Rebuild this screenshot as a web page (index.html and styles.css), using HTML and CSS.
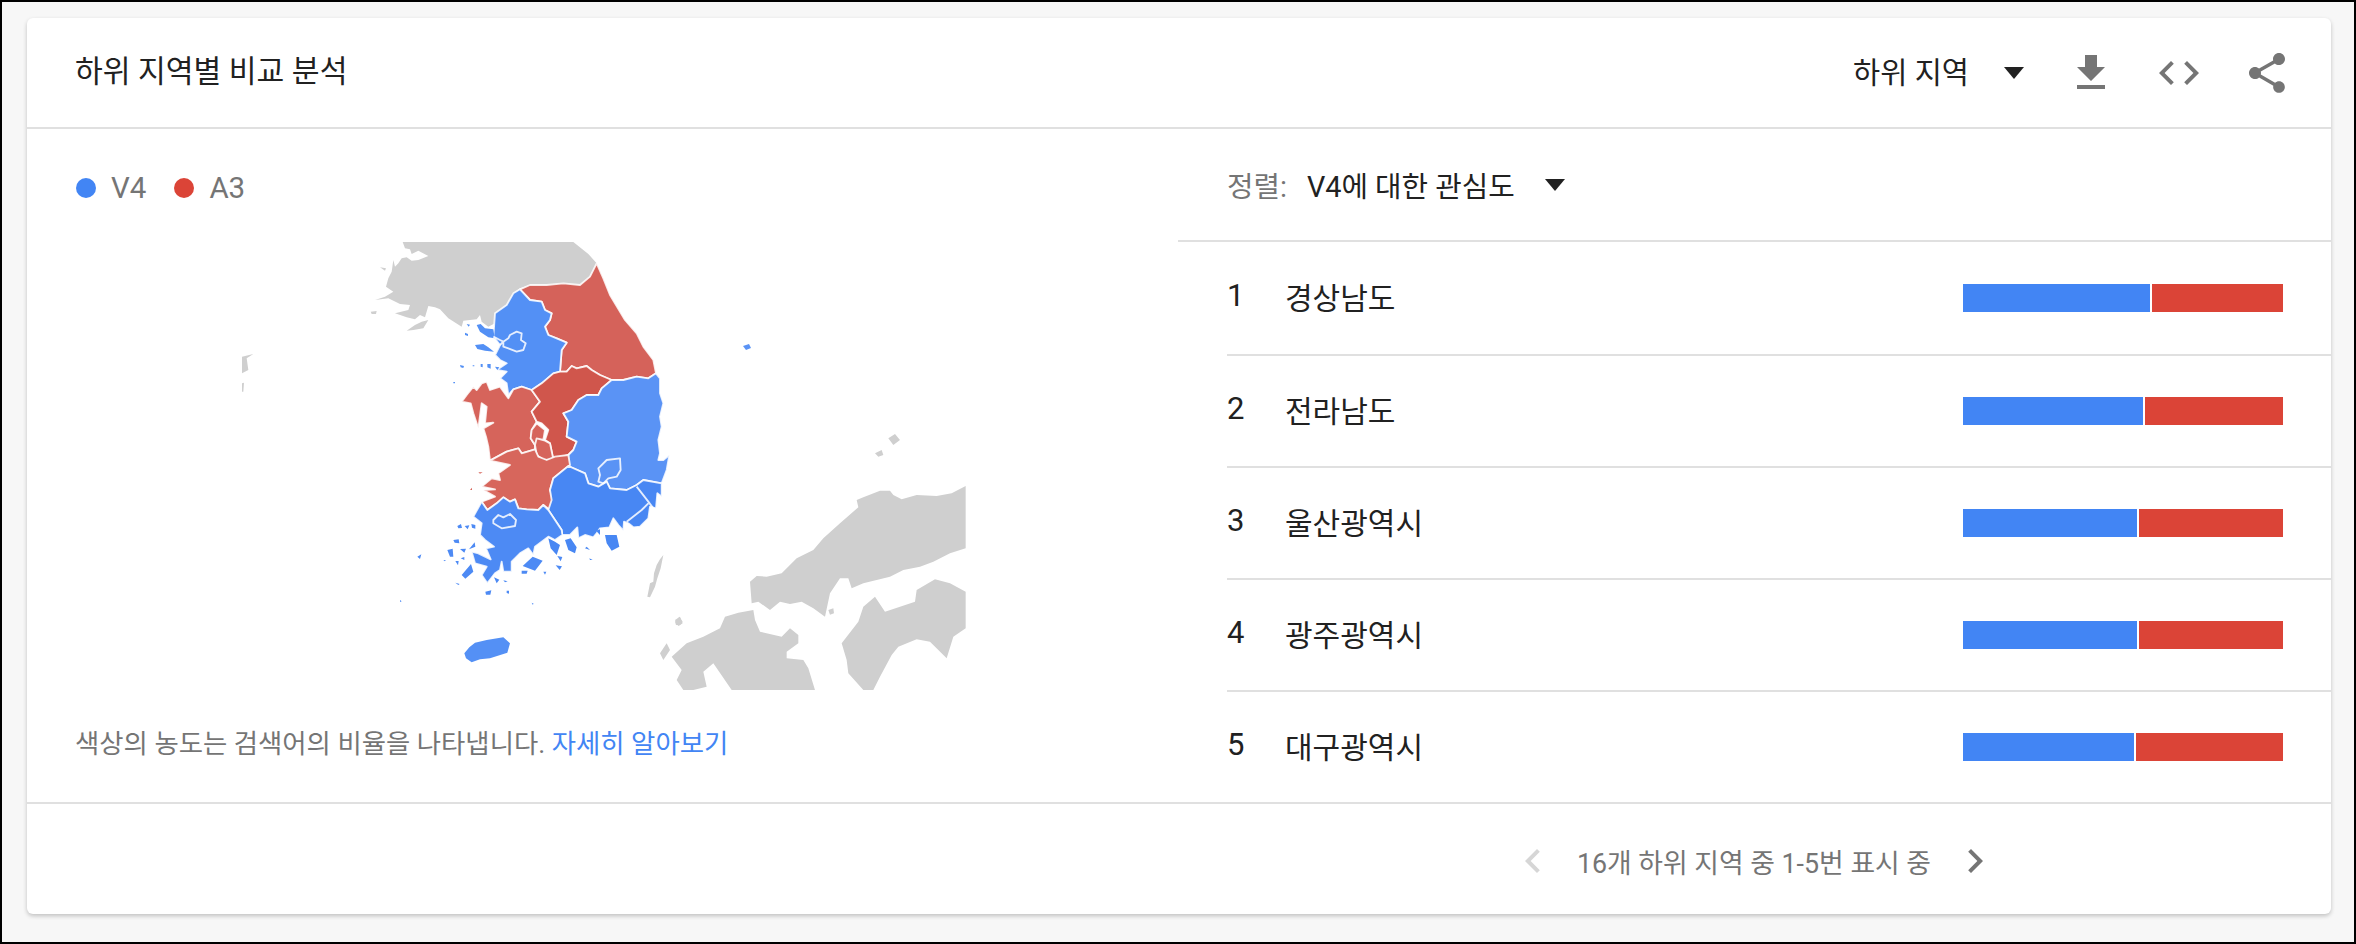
FILE: index.html
```html
<!DOCTYPE html>
<html lang="ko">
<head>
<meta charset="utf-8">
<title>하위 지역별 비교 분석</title>
<link rel="stylesheet" href="styles.css">
</head>
<body>
<main class="page">
  <section class="card">
    <header class="card-head">
      <h2 class="title">하위 지역별 비교 분석</h2>
      <div class="tools">
        <span class="picker">하위 지역</span>
        <span class="caret caret-head"></span>
        <div class="icons">
          <svg class="icon" viewBox="0 0 24 24"><path d="M19 9h-4V3H9v6H5l7 7 7-7zM5 18v2h14v-2H5z"/></svg>
          <svg class="icon" viewBox="0 0 24 24"><path d="M9.4 16.6L4.8 12l4.6-4.6L8 6l-6 6 6 6 1.4-1.4zm5.2 0l4.6-4.6-4.6-4.6L16 6l6 6-6 6-1.4-1.4z"/></svg>
          <svg class="icon" viewBox="0 0 24 24"><path d="M18 16.08c-.76 0-1.44.3-1.96.77L8.91 12.7c.05-.23.09-.46.09-.7s-.04-.47-.09-.7l7.05-4.11c.54.5 1.25.81 2.04.81 1.66 0 3-1.34 3-3s-1.34-3-3-3-3 1.34-3 3c0 .24.04.47.09.7L8.04 9.81C7.5 9.31 6.79 9 6 9c-1.66 0-3 1.34-3 3s1.34 3 3 3c.79 0 1.5-.31 2.04-.81l7.12 4.16c-.05.21-.08.43-.08.65 0 1.61 1.31 2.92 2.92 2.92 1.61 0 2.92-1.31 2.92-2.92s-1.31-2.92-2.92-2.92z"/></svg>
        </div>
      </div>
    </header>

    <div class="card-body">
      <div class="map-col">
        <div class="legend">
          <span class="dot dot-blue"></span><span class="legend-label">V4</span>
          <span class="dot dot-red"></span><span class="legend-label">A3</span>
        </div>
        <svg class="map" viewBox="242 242 724 448" width="724" height="448">
          <g transform="translate(220 230) scale(.33333)" class="land">
            <path d="M66 380L100 372L80 385L85 420L66 430ZM66 460L72 458L70 485L66 485Z"/>
          </g>
          <g transform="translate(360 230) scale(.33333)">
            <path class="land" d="M128 36L135 55L150 58L155 72L175 62L205 78L175 90L155 92L140 82L125 85L115 100L105 110L100 90L95 125L85 145L78 170L100 185L75 200L45 210L85 205L120 222L150 225L145 240L105 250L140 262L165 268L180 255L195 262L205 228L225 232L240 238L265 265L305 290L310 272L350 268L360 255L365 275L385 290L405 280L407 248L440 225L460 190L480 175L510 165L560 165L610 160L660 165L690 140L710 100L685 72L640 36ZM32 245L50 243L48 252L35 252ZM140 302L165 285L185 275L205 270L190 295L160 300ZM60 112L78 115L75 122Z"/>
            <path class="gangwon" d="M480 178L510 165L560 165L610 160L660 165L690 140L710 100L730 145L750 195L795 270L830 310L850 350L880 390L888 430L865 445L830 440L790 450L755 450L720 435L695 420L680 408L650 415L635 408L620 425L600 425L605 360L620 338L590 325L565 315L555 290L570 270L575 250L555 240L545 215L510 210Z"/>
            <path class="gyeonggi" d="M480 178L510 210L545 215L555 240L575 250L570 270L555 290L565 315L590 325L620 338L605 360L600 425L580 430L545 460L515 480L485 470L460 478L445 495L440 460L420 445L440 425L410 420L440 400L420 390L405 375L420 345L400 320L405 250L440 225L460 190Z"/>
            <path class="gyeonggi nostroke" d="M350 285L362 282L375 295L400 298L404 325L385 322L360 305ZM345 345L370 342L385 352L402 365L375 362L352 357ZM300 405L312 408L310 414L302 412ZM338 406L343 406L343 409L338 409ZM362 402L368 402L368 412L362 410ZM382 402L392 402L392 416L382 412ZM405 410L412 420L418 412ZM280 456L285 456L285 460L280 460ZM320 282L330 284L326 290ZM315 308L324 312L324 318L315 315Z"/>
            <path class="outline" d="M430 335L445 325L450 315L470 305L485 310L483 330L497 340L490 360L470 365L445 355L430 350ZM400 320L420 330L430 335L420 345"/>
            <path class="chungnam" d="M515 480L540 515L515 545L530 575L515 600L512 625L525 645L525 658L485 670L475 655L440 665L390 692L385 650L378 620L370 595L400 578L375 580L380 530L365 520L355 595L340 550L332 520L305 515L320 495L340 470L350 480L365 460L380 455L390 480L420 470L445 505L460 478L485 470Z"/>
            <path class="chungbuk" d="M600 425L620 425L635 408L650 415L680 408L695 420L720 435L755 450L725 475L715 495L680 495L655 510L635 540L610 550L625 575L620 620L650 635L640 660L625 675L580 688L570 640L555 630L565 600L545 580L530 575L515 545L540 515L515 480L545 460L580 430Z"/>
            <path class="chungnam" d="M530 580L555 600L550 630L530 625L525 645L512 625L515 600ZM525 645L530 625L555 632L570 640L580 688L550 690L530 675Z"/>
            <path class="gyeongbuk" d="M755 450L790 450L830 440L865 445L888 430L900 445L900 490L910 520L900 560L905 590L895 630L900 670L895 690L910 690L928 675L920 720L905 760L850 750L830 765L800 780L750 775L740 755L715 770L685 760L675 730L625 708L625 675L640 660L650 635L620 620L625 575L610 550L635 540L655 510L680 495L715 495L725 475Z"/>
          </g>
          <g transform="translate(400 440) scale(.33333)">
            <path class="jeonbuk" d="M270 62L320 35L355 25L365 40L405 28L415 50L440 60L465 50L505 45L510 75L460 115L450 150L460 180L450 210L430 195L415 210L380 208L355 205L345 178L330 185L310 172L290 190L262 210L245 185L285 170L250 150L285 148L245 140L275 115L300 120L295 100L330 75Z"/>
            <path class="jeonbuk nostroke" d="M235 97L248 97L240 101ZM210 150L216 143L216 150Z"/>
            <path class="gyeongnam" d="M505 78L555 100L565 130L595 140L620 125L630 145L680 150L710 135L730 120L785 130L785 170L772 160L768 205L750 200L745 235L720 260L700 262L685 250L672 245L670 272L655 255L640 235L628 262L600 265L590 280L580 292L555 285L535 295L532 262L510 285L487 285L485 270L445 210L455 180L450 150L460 115Z"/>
            <path class="outline" d="M595 85L620 60L660 55L662 90L650 110L625 115L610 130L595 125L600 105ZM710 140L745 185L760 205M745 190L725 210L680 245"/>
            <path class="gyeongnam nostroke" d="M615 285L650 285L658 320L635 332L620 310ZM495 300L512 295L530 322L525 340L505 330ZM445 295L465 305L480 315L470 345L452 325ZM560 320L570 330L555 325ZM568 355L578 360L570 360ZM588 272L600 268L600 285Z"/>
            <path class="jeonnam" d="M445 210L430 195L415 210L380 208L355 205L345 178L330 185L310 172L290 190L262 210L245 185L220 230L245 250L240 285L255 300L282 320L258 325L272 358L235 340L215 335L225 370L260 380L245 405L262 430L285 400L300 390L305 365L310 395L335 395L335 365L360 340L385 325L400 345L405 320L445 290L465 300L487 285L485 270Z"/>
            <path class="outline" d="M280 240L295 225L310 232L330 222L348 240L345 258L305 265L280 250Z"/>
            <path class="jeonnam nostroke" d="M172 258L183 252L186 264L175 265ZM194 258L208 256L203 268ZM214 252L226 255L226 266L216 263ZM160 300L176 298L178 310L164 308ZM142 330L158 326L160 350L150 350ZM180 327L198 326L193 338ZM207 328L224 307L226 320ZM182 355L193 351L193 360ZM166 363L176 363L174 376ZM185 405L213 372L220 395L196 416ZM368 378L398 350L428 362L405 392ZM365 392L383 392L380 401L365 401ZM430 395L439 395L435 404ZM472 348L487 351L482 364ZM467 376L486 379L479 390ZM282 412L298 419L290 430ZM310 421L323 424L315 427ZM256 455L274 451L271 464L258 464ZM320 452L327 452L327 461L320 459ZM130 360L137 360L135 364ZM52 350L64 343L60 357ZM166 428L179 432L175 435ZM395 488L401 491L398 494ZM0 480L5 484L0 486Z"/>
            <path class="jeju" d="M193 640L208 622L225 608L260 600L310 592L330 610L322 638L270 655L240 658L215 667L198 655Z"/>
            <path class="land" d="M790 345L780 358L770 375L762 400L760 425L750 430L742 470L750 472L765 440L772 415L782 385ZM825 545L838 530L848 545L840 556L828 555Z"/>
          </g>
          <path class="gyeongbuk nostroke" d="M743 346L749 344L751 348L746 350Z"/>
          <g transform="translate(650 420) scale(.33333)" class="land">
            <path d="M947 198L905 220L860 228L800 225L755 238L730 225L720 212L690 212L640 232L620 240L625 262L570 310L520 355L490 390L440 415L395 460L350 470L320 468L300 485L305 550L325 545L360 570L390 545L420 552L455 545L490 565L525 590L540 520L570 475L595 475L605 505L640 490L720 470L760 450L810 440L850 425L900 400L947 385Z"/>
            <path d="M947 515L900 490L855 478L800 510L795 545L705 575L675 530L640 560L625 605L575 670L590 720L595 760L640 810L670 810L690 770L725 705L745 680L800 658L840 665L890 715L910 650L947 625Z"/>
            <path d="M225 590L265 578L310 570L315 600L330 635L395 650L420 625L445 645L445 670L410 695L410 715L460 720L475 745L495 810L245 810L190 730L160 755L170 800L130 810L100 810L80 780L95 750L65 710L110 670L160 650L210 625Z"/>
            <path d="M715 55L735 42L750 60L730 75ZM675 100L695 90L700 105L685 110ZM75 600L90 590L98 610L85 618ZM535 570L550 565L552 580L540 584ZM30 700L50 670L60 690L40 720Z"/>
          </g>
        </svg>
        <p class="note">색상의 농도는 검색어의 비율을 나타냅니다. <a class="link" href="#">자세히 알아보기</a></p>
      </div>

      <div class="list-col">
        <div class="sort">
          <span class="sort-label">정렬:</span>
          <span class="sort-value">V4에 대한 관심도</span>
          <span class="caret caret-sort"></span>
        </div>
        <div class="row row-first">
          <span class="num">1</span><span class="name">경상남도</span>
          <div class="bar"><span class="seg-blue" style="width:187px"></span><span class="seg-red"></span></div>
        </div>
        <div class="row">
          <span class="num">2</span><span class="name">전라남도</span>
          <div class="bar"><span class="seg-blue" style="width:180px"></span><span class="seg-red"></span></div>
        </div>
        <div class="row">
          <span class="num">3</span><span class="name">울산광역시</span>
          <div class="bar"><span class="seg-blue" style="width:174px"></span><span class="seg-red"></span></div>
        </div>
        <div class="row">
          <span class="num">4</span><span class="name">광주광역시</span>
          <div class="bar"><span class="seg-blue" style="width:174px"></span><span class="seg-red"></span></div>
        </div>
        <div class="row row-last">
          <span class="num">5</span><span class="name">대구광역시</span>
          <div class="bar"><span class="seg-blue" style="width:171px"></span><span class="seg-red"></span></div>
        </div>
      </div>
    </div>

    <footer class="card-foot">
      <svg class="chev chev-off" viewBox="0 0 24 24"><path d="M15.41 7.41L14 6l-6 6 6 6 1.41-1.41L10.83 12z"/></svg>
      <span class="pager">16개 하위 지역 중 1-5번 표시 중</span>
      <svg class="chev" viewBox="0 0 24 24"><path d="M10 6L8.59 7.41 13.17 12l-4.58 4.59L10 18l6-6z"/></svg>
    </footer>
  </section>
</main>
</body>
</html>
```
FILE: styles.css
```css
* { box-sizing: border-box; }
html, body { margin: 0; padding: 0; }
body {
  font-family: Roboto, "Noto Sans CJK KR", sans-serif;
  color: #212121;
}
.page {
  width: 2356px;
  height: 944px;
  background: #f7f7f7;
  border: 2px solid #000;
  padding: 16px 23px 28px 25px;
}
.card {
  height: 896px;
  background: #fff;
  border-radius: 6px;
  box-shadow: 0 2px 4px rgba(0,0,0,.22);
  display: flex;
  flex-direction: column;
}
.card-head {
  height: 111px;
  flex: none;
  display: flex;
  align-items: center;
  justify-content: space-between;
  padding: 0 40px 0 48px;
  border-bottom: 2px solid #e0e0e0;
}
.title { margin: 0 0 2px; font-size: 30.2px; font-weight: 400; line-height: 36px; }
.tools { display: flex; align-items: center; }
.picker { font-size: 29.5px; line-height: 36px; }
.caret {
  display: block;
  width: 0;
  height: 0;
  border-left: 10px solid transparent;
  border-right: 10px solid transparent;
  border-top: 12px solid #212121;
}
.caret-head { margin-left: 35px; }
.icons { display: flex; gap: 40px; margin-left: 43px; }
.icon { display: block; width: 48px; height: 48px; fill: #757575; }

.card-body { flex: 1; display: flex; min-height: 0; }
.map-col { width: 1151px; flex: none; padding-left: 48px; }
.legend {
  height: 113px;
  display: flex;
  align-items: flex-start;
  padding: 42px 0 0 1px;
  font-size: 29.5px;
  line-height: 34px;
  color: #757575;
}
.dot { width: 20px; height: 20px; border-radius: 50%; margin-top: 7px; }
.dot-blue { background: #4285f4; }
.dot-red { background: #db4437; }
.legend-label { margin: 0 28px 0 15px; }
.map { display: block; margin-left: 167px; filter: blur(.5px); }
.land { fill: #cfcfcf; }
.land path { fill: #cfcfcf; }
path.land { fill: #cfcfcf; }
.gangwon, .chungnam, .chungbuk, .jeonbuk, .gyeonggi, .gyeongbuk, .gyeongnam, .jeonnam, .outline {
  stroke: #fff;
  stroke-opacity: .85;
  stroke-width: 5.5;
  stroke-linejoin: round;
}
.gangwon { fill: #d5625a; }
.chungnam { fill: #d6645b; }
.chungbuk { fill: #d0564c; }
.jeonbuk { fill: #d7665c; }
.gyeonggi { fill: #5390f5; }
.gyeongbuk { fill: #5a93f5; }
.gyeongnam { fill: #4887f3; }
.jeonnam { fill: #4d8af4; }
.jeju { fill: #5490f5; }
.nostroke { stroke: none; }
.outline { fill: none; }
.note {
  margin: 38px 0 0;
  font-size: 26.4px;
  line-height: 32px;
  color: #757575;
}
.link { color: #4285f4; text-decoration: none; }

.list-col { flex: 1; min-width: 0; }
.sort {
  height: 113px;
  display: flex;
  align-items: center;
  padding-left: 49px;
  border-bottom: 2px solid #e0e0e0;
  font-size: 28.8px;
}
.sort-label { color: #757575; }
.sort-value { margin-left: 20px; }
.caret-sort { margin-left: 30px; }
.row {
  height: 112px;
  margin-left: 49px;
  display: flex;
  align-items: center;
  border-bottom: 2px solid #e0e0e0;
}
.row-first { height: 114px; }
.row-last { height: 110px; border-bottom: 0; }
.num { width: 58px; flex: none; font-size: 31px; margin-bottom: 5px; }
.name { flex: 1; font-size: 30px; margin-bottom: 5px; }
.bar { width: 320px; height: 28px; margin-right: 48px; display: flex; flex: none; }
.seg-blue { background: #4285f4; display: block; }
.seg-red { background: #db4437; display: block; flex: 1; margin-left: 2px; }

.card-foot {
  height: 112px;
  flex: none;
  border-top: 2px solid #e0e0e0;
  display: flex;
  align-items: center;
  justify-content: flex-end;
  padding: 4px 332px 0 0;
}
.pager { font-size: 26.8px; color: #757575; margin: 0 20px; }
.chev { display: block; width: 48px; height: 48px; fill: #757575; flex: none; }
.chev-off { fill: #d6d6d6; }
```
